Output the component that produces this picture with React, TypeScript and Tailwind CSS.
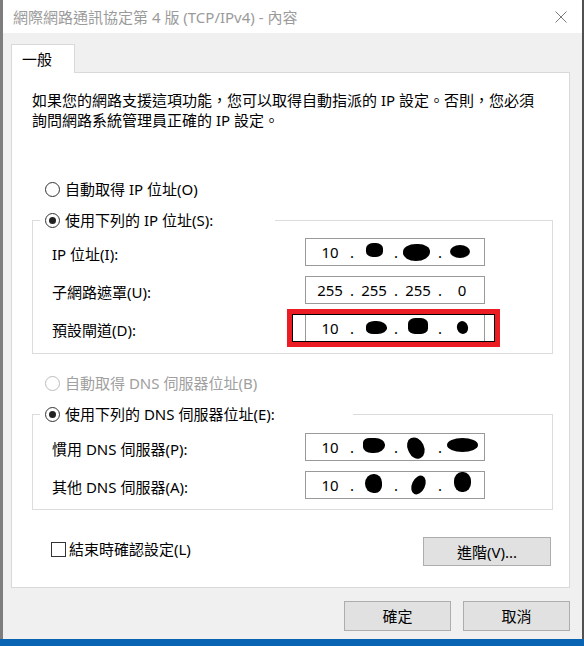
import type { ReactNode } from 'react';

type Seg = string | { blob: string };

// blobs = the scribbled-out parts of the addresses
const ipAddr: Seg[] = [
  '10',
  { blob: 'w-[17px] h-[14px] rounded-[40%] -translate-y-[2px]' },
  { blob: 'w-[27px] h-[17px] rounded-[50%_45%_55%_50%] -translate-x-[2px]' },
  { blob: 'w-[20px] h-[13px] rounded-[50%] -translate-x-[2px] -translate-y-[1px]' },
];
const maskAddr: Seg[] = ['255', '255', '255', '0'];
const gatewayAddr: Seg[] = [
  '10',
  { blob: 'w-[21px] h-[13px] rounded-[40%_50%_45%_35%] translate-x-[2px] -translate-y-[1px]' },
  { blob: 'w-[20px] h-[16px] rounded-[35%] -translate-y-[2px]' },
  { blob: 'w-[11px] h-[13px] rounded-[50%] -translate-y-[1px] -rotate-[20deg]' },
];
const dns1Addr: Seg[] = [
  '10',
  { blob: 'w-[22px] h-[15px] rounded-[30%_45%_50%_40%] -translate-y-[2px]' },
  { blob: 'w-[16px] h-[22px] rounded-[45%_50%_50%_45%] -translate-x-[2px] translate-y-[1px] -rotate-[25deg]' },
  { blob: 'w-[31px] h-[14px] rounded-[50%] -translate-y-[2px]' },
];
const dns2Addr: Seg[] = [
  '10',
  { blob: 'w-[17px] h-[19px] rounded-[50%_45%_40%_50%] -translate-x-[1px] -translate-y-[2px]' },
  { blob: 'w-[13px] h-[20px] rounded-[50%] rotate-[25deg]' },
  { blob: 'w-[17px] h-[20px] rounded-[45%] -translate-y-[3px]' },
];

function IpField({ segs }: { segs: Seg[] }) {
  return (
    <div className="w-[180px] h-[28px] border border-[#999999] bg-white flex items-center pl-[6px]">
      {segs.map((s, i) => (
        <div key={i} className="flex items-center">
          {i > 0 && <span className="w-[8px] text-center leading-[20px]">.</span>}
          <span className="w-[36px] h-[20px] flex items-center justify-center leading-[20px]">
            {typeof s === 'string' ? s : <span className={'block bg-black ' + s.blob} />}
          </span>
        </div>
      ))}
    </div>
  );
}

function Radio({ label, checked, disabled }: { label: string; checked?: boolean; disabled?: boolean }) {
  return (
    <div className={'flex items-center h-[20px] ' + (disabled ? 'text-[#a0a0a0]' : 'text-black')}>
      <span
        className={
          'w-[15px] h-[15px] rounded-full border bg-white flex items-center justify-center ' +
          (disabled ? 'border-[#bcbcbc]' : 'border-[#333333]')
        }
      >
        {checked && <span className="w-[7px] h-[7px] rounded-full bg-[#222222]" />}
      </span>
      <span className="ml-[5px] leading-[20px]">{label}</span>
    </div>
  );
}

function Row({ label, children }: { label: string; children: ReactNode }) {
  return (
    <div className="flex items-center">
      <span className="w-[253px] leading-[20px] pt-[3px]">{label}</span>
      {children}
    </div>
  );
}

function GroupBox({ legend, legendW, pt, pb, children }: { legend: string; legendW: string; pt: string; pb: string; children: ReactNode }) {
  return (
    <fieldset className={'ml-[20px] mr-[16px] border border-[#dcdcdc] p-0 ' + pb}>
      <legend className={'ml-[7px] pl-[5px] ' + legendW}>
        <Radio label={legend} checked />
      </legend>
      <div className={'flex flex-col gap-[10px] pl-[19px] ' + pt}>{children}</div>
    </fieldset>
  );
}

function WinButton({ label, w, h }: { label: string; w: string; h: string }) {
  return (
    <button className={'border border-[#adadad] bg-[#e1e1e1] flex items-center justify-center leading-[20px] ' + w + ' ' + h}>
      {label}
    </button>
  );
}

export default function App() {
  return (
    <div className="w-[584px] h-[646px] flex flex-col overflow-hidden text-[15px] text-black font-['Noto_Sans','Noto_Sans_CJK_TC',sans-serif]">
      <div className="flex h-[639px]">
        <div className="w-[3px] bg-[#7d7d7d]" />
        <div className="w-[579px] flex flex-col">
          {/* title bar */}
          <div className="h-[33px] bg-white flex items-center justify-between pl-[10px] pr-[15px]">
            <span className="text-[#9b9b9b] leading-[20px]">網際網路通訊協定第 4 版 (TCP/IPv4) - 內容</span>
            <svg width="12" height="12" viewBox="0 0 12 12">
              <path d="M0.5 0.5 L11.5 11.5 M11.5 0.5 L0.5 11.5" stroke="#7a7a7a" strokeWidth="1" fill="none" />
            </svg>
          </div>

          {/* body */}
          <div className="flex-1 bg-[#f0f0f0] pt-[11px] pl-[8px] pr-[12px] flex flex-col">
            <div className="w-[64px] h-[29px] -mb-px relative z-10 bg-white border border-b-0 border-[#d9d9d9] pl-[10px] flex items-center">
              <span className="leading-[20px]">一般</span>
            </div>
            <div className="border border-[#d9d9d9] bg-white flex flex-col pb-[21px]">
              <p className="mt-[17px] pl-[20px] leading-[20px]">
                如果您的網路支援這項功能，您可以取得自動指派的 IP 設定。否則，您必須
                <br />
                詢問網路系統管理員正確的 IP 設定。
              </p>

              <div className="mt-[49px] pl-[33px]">
                <Radio label="自動取得 IP 位址(O)" />
              </div>

              <div className="mt-[11px]">
                <GroupBox legend="使用下列的 IP 位址(S):" legendW="w-[235px]" pt="pt-[8px]" pb="pb-[11px]">
                  <Row label="IP 位址(I):">
                    <IpField segs={ipAddr} />
                  </Row>
                  <Row label="子網路遮罩(U):">
                    <IpField segs={maskAddr} />
                  </Row>
                  <Row label="預設閘道(D):">
                    <div className="relative">
                      <IpField segs={gatewayAddr} />
                      <span className="absolute -left-[18px] -top-[5px] -right-[15px] -bottom-[5px] border-[5px] border-[#ec1c24] shadow-[inset_0_0_0_1px_#000]" />
                    </div>
                  </Row>
                </GroupBox>
              </div>

              <div className="mt-[19px] pl-[33px]">
                <Radio label="自動取得 DNS 伺服器位址(B)" disabled />
              </div>

              <div className="mt-[11px]">
                <GroupBox legend="使用下列的 DNS 伺服器位址(E):" legendW="w-[313px]" pt="pt-[9px]" pb="pb-[10px]">
                  <Row label="慣用 DNS 伺服器(P):">
                    <IpField segs={dns1Addr} />
                  </Row>
                  <Row label="其他 DNS 伺服器(A):">
                    <IpField segs={dns2Addr} />
                  </Row>
                </GroupBox>
              </div>

              <div className="mt-[27px] pl-[39px] pr-[18px] flex items-start justify-between">
                <div className="mt-[2px] flex items-center h-[20px]">
                  <span className="w-[15px] h-[15px] border border-[#333333] bg-white" />
                  <span className="ml-[3px] leading-[20px]">結束時確認設定(L)</span>
                </div>
                <WinButton label="進階(V)..." w="w-[128px]" h="h-[29px]" />
              </div>
            </div>

            <div className="mt-[13px] flex justify-end gap-[12px]">
              <WinButton label="確定" w="w-[107px]" h="h-[30px]" />
              <WinButton label="取消" w="w-[107px]" h="h-[30px]" />
            </div>
          </div>
        </div>
        <div className="w-[2px] bg-[#505050]" />
      </div>
      <div className="h-[7px] bg-[#0a64b4]" />
    </div>
  );
}
